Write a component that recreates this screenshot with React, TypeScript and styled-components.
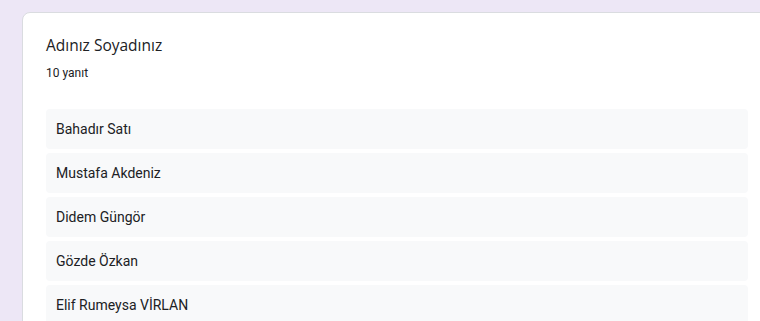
import React from 'react';
import styled, { createGlobalStyle } from 'styled-components';

const GlobalStyle = createGlobalStyle`
  html, body {
    margin: 0;
    padding: 0;
    background: #ede7f6;
    overflow: hidden;
  }
`;

const Page = styled.div`
  height: 321px;
  overflow: hidden;
  padding: 12px 0 0 22px;
  box-sizing: border-box;
`;

const Card = styled.section`
  width: 751px;
  background: #fff;
  border: 1px solid #dadce0;
  border-radius: 8px;
  padding: 20px 24px 24px 23px;
  box-sizing: border-box;
`;

const Title = styled.h2`
  margin: 0;
  font-family: 'Open Sans', Roboto, sans-serif;
  font-weight: 400;
  font-size: 15.5px;
  line-height: 24px;
  color: #202124;
`;

const Count = styled.div`
  margin-top: 8px;
  font-family: Roboto, 'Noto Sans', sans-serif;
  font-size: 12px;
  line-height: 16px;
  color: #202124;
`;

const List = styled.div`
  margin-top: 28px;
  display: flex;
  flex-direction: column;
  gap: 4px;
`;

const Answer = styled.div`
  height: 40px;
  display: flex;
  align-items: center;
  padding: 0 10px;
  background: #f8f9fa;
  border-radius: 4px;
  font-family: Roboto, 'Noto Sans', sans-serif;
  font-size: 14px;
  color: #202124;
`;

const answers = [
  'Bahadır Satı',
  'Mustafa Akdeniz',
  'Didem Güngör',
  'Gözde Özkan',
  'Elif Rumeysa VİRLAN',
];

export default function App() {
  return (
    <>
      <GlobalStyle />
      <Page>
        <Card>
          <Title>Adınız Soyadınız</Title>
          <Count>10 yanıt</Count>
          <List>
            {answers.map((a) => (
              <Answer key={a}>{a}</Answer>
            ))}
          </List>
        </Card>
      </Page>
    </>
  );
}
